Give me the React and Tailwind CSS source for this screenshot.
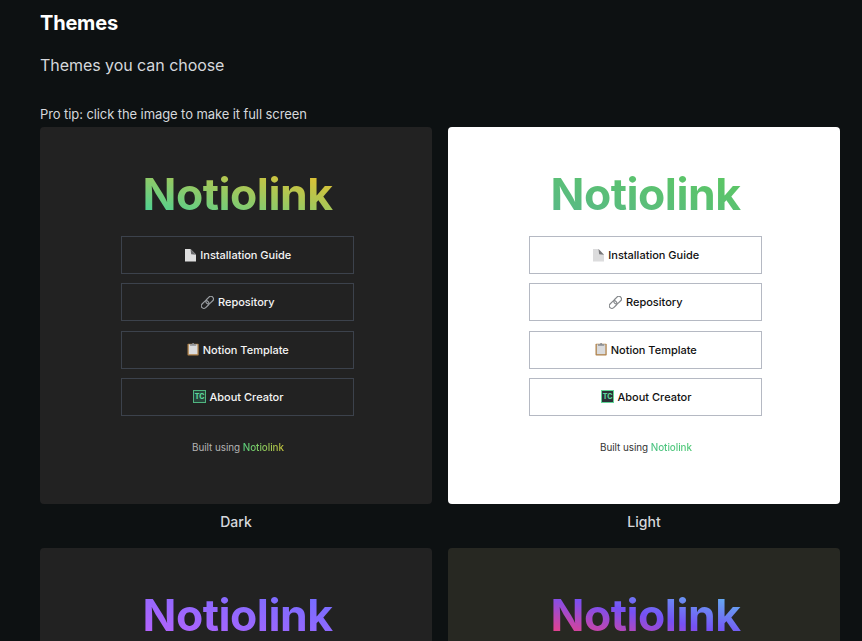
function PageIcon({ light }) {
  return (
    <svg className="h-[13px] w-[11px] shrink-0" viewBox="0 0 11 13">
      <path d="M0 0H5.5L11 5.5V12.4H0Z" fill={light ? "#dcdcdd" : "#dedede"} />
      <path d="M5.5 0L11 5.7L6.2 5.2Z" fill={light ? "#77777a" : "#68686a"} />
    </svg>
  );
}

function LinkIcon({ light }) {
  return (
    <svg className="h-[13px] w-[13px] shrink-0" viewBox="0 0 13 13" fill="none">
      <g transform="rotate(-45 6.5 6.5)" stroke={light ? "#85888b" : "#989ca0"} strokeWidth="1.2">
        <rect x="-1" y="3.7" width="8.6" height="5.2" rx="2.6" />
        <rect x="5.4" y="3.7" width="8.6" height="5.2" rx="2.6" />
      </g>
    </svg>
  );
}

function ClipboardIcon() {
  return (
    <svg className="h-[13px] w-[12px] shrink-0" viewBox="0 0 12 13">
      <rect x="0.5" y="0.8" width="11.2" height="11.7" rx="0.8" fill="#b0824a" />
      <rect x="1.8" y="1.4" width="8.6" height="9.8" fill="#dadbdd" />
      <path d="M3 1.2H4.9L5.6 0H6.6L7.3 1.2H9.2V2.7H3Z" fill="#8b8e93" />
    </svg>
  );
}

function CreatorIcon({ light }) {
  return (
    <svg className="h-[13px] w-[13px] shrink-0" viewBox="0 0 13 13">
      <rect x="0.5" y="0.5" width="12" height="12" fill={light ? "#2b3137" : "#27443a"} stroke={light ? "#62d698" : "#50b580"} />
      <text x="6.5" y="9" textAnchor="middle" fontFamily="Inter, sans-serif" fontWeight="800" fontSize="7" fill="#5bd39a">TC</text>
    </svg>
  );
}

const links = [
  { label: "Installation Guide", Icon: PageIcon, gap: "gap-[4.5px]", text: "pt-px" },
  { label: "Repository", Icon: LinkIcon, gap: "gap-[3.5px]", text: "" },
  { label: "Notion Template", Icon: ClipboardIcon, gap: "gap-[3.5px]", text: "pt-px" },
  { label: "About Creator", Icon: CreatorIcon, gap: "gap-[4px]", text: "pt-px" },
];

const themes = [
  {
    name: "Dark",
    card: "bg-[#222222]",
    title: "bg-linear-[to_top_right,#42d29a,#f0bf28]",
    button: "border-[#3c424c] text-[#f4f4f4]",
    built: "text-[#b4b4b4]",
    brand: "bg-linear-[to_right,#58d07c,#c4c43c]",
  },
  {
    name: "Light",
    light: true,
    card: "bg-white",
    title: "bg-linear-[to_top_right,#59b889,#5cc860]",
    button: "border-[#b5b9c3] text-[#111111]",
    built: "text-[#333333]",
    brand: "bg-linear-[to_right,#4cc283,#4cc874]",
  },
];

const moreThemes = [
  { name: "Purple", card: "bg-[#222222]", title: "bg-linear-[to_top_right,#b962fc,#6e6eff]" },
  { name: "Monokai", card: "bg-[#272822]", title: "bg-linear-[to_top_right,#f83f7a,#7650f5_50%,#60c4f0]" },
];

function CardTitle({ gradient }) {
  return (
    <h2 className="flex h-[46px] items-center justify-center">
      <span className={`bg-clip-text text-[44.5px] leading-[46px] font-bold tracking-[-0.5px] text-transparent ${gradient}`}>
        Notiolink
      </span>
    </h2>
  );
}

function ThemeCard({ theme }) {
  return (
    <figure>
      <div className={`h-[377px] rounded pt-[44px] pr-[78px] pl-[81px] antialiased ${theme.card}`}>
        <CardTitle gradient={theme.title} />
        <div className="mt-[19px] flex flex-col gap-[9.3px]">
          {links.map(({ label, Icon, gap, text }) => (
            <div key={label} className={`flex h-[38px] items-center justify-center border pl-px text-[11px] font-medium ${gap} ${theme.button}`}>
              <Icon light={theme.light} />
              <span className={`whitespace-nowrap ${text}`}>{label}</span>
            </div>
          ))}
        </div>
        <p className={`mt-[24px] pl-px text-center text-[9.9px] leading-[15px] tracking-[-0.05px] ${theme.built}`}>
          Built using <span className={`bg-clip-text font-medium text-transparent ${theme.brand}`}>Notiolink</span>
        </p>
      </div>
      <figcaption className="mt-2 text-center text-sm leading-5 font-medium text-[#d5d8dc]">{theme.name}</figcaption>
    </figure>
  );
}

export default function App() {
  return (
    <main className="h-[641px] overflow-hidden bg-[#0d1112] px-10 pt-[9px] font-['Inter',sans-serif] text-[#d5d8dc]">
      <h1 className="text-xl leading-7 font-bold tracking-[-0.2px] text-white">Themes</h1>
      <p className="mt-4 text-base leading-6 tracking-[-0.05px]">Themes you can choose</p>
      <p className="mt-[27px] text-[13px] leading-5 tracking-[-0.09px]">Pro tip: click the image to make it full screen</p>
      <div className="mt-[3px] grid w-[800px] grid-cols-2 gap-4">
        {themes.map((theme) => (
          <ThemeCard key={theme.name} theme={theme} />
        ))}
        {moreThemes.map((theme) => (
          <div key={theme.name} className={`h-[93px] rounded-t pt-[44px] pr-[78px] pl-[81px] antialiased ${theme.card}`}>
            <CardTitle gradient={theme.title} />
          </div>
        ))}
      </div>
    </main>
  );
}
